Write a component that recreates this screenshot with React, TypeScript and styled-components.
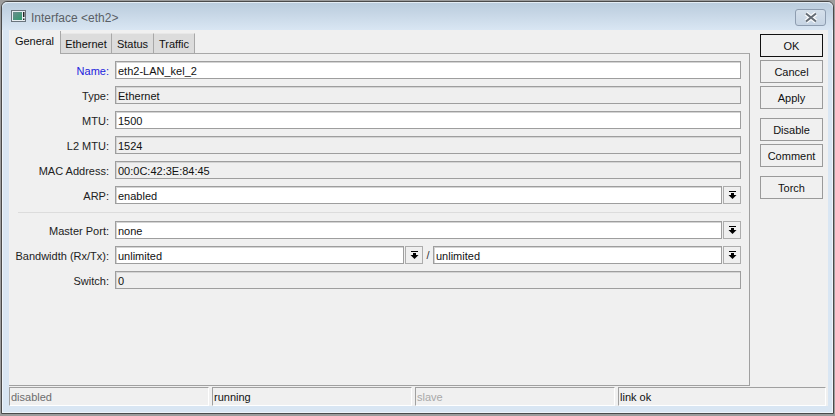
import React from 'react';
import styled, { createGlobalStyle } from 'styled-components';

const GlobalStyle = createGlobalStyle`
    html, body {
        margin: 0;
        padding: 0;
        background: #9c9c9c;
        font-family: "Liberation Sans", Arial, sans-serif;
    }
`;

const Page = styled.div`
    width: 835px;
    height: 416px;
    overflow: hidden;
`;

const Frame = styled.div`
    box-sizing: border-box;
    width: 833px;
    height: 413px;
    margin: 1px 0 0 1px;
    display: flex;
    flex-direction: column;
    border: 1px solid #4a4a4a;
    border-top-left-radius: 6px;
    border-top-right-radius: 6px;
    background: #d9e6f3;
    box-shadow: inset 0 0 0 1px #eef4fa;
    padding: 0 5px 7px 7px;
`;

const TitleBar = styled.div`
    height: 28px;
    margin: 0 -5px 0 -7px;
    padding: 0 7px 0 9px;
    display: flex;
    align-items: center;
    flex-shrink: 0;
    border-top-left-radius: 6px;
    border-top-right-radius: 6px;
    background: linear-gradient(#b9cbdc, #d9e6f3);
    box-shadow: inset 0 1px 0 #e4edf5;
`;

const TitleText = styled.span`
    margin: 3px 0 0 5px;
    font-size: 12px;
    color: #5a5f66;
    flex: 1;
`;

const CloseButton = styled.div`
    box-sizing: border-box;
    width: 31px;
    height: 17px;
    margin-top: 3px;
    display: flex;
    align-items: center;
    justify-content: center;
    border: 1px solid #8e9db0;
    border-radius: 3px;
    background: linear-gradient(#d5e0eb, #c6d4e3);
`;

const Content = styled.div`
    flex: 1;
    min-height: 0;
    display: flex;
    flex-direction: column;
    background: #f0f0f0;
`;

const Main = styled.div`
    flex: 1;
    min-height: 0;
    display: flex;
`;

const TabColumn = styled.div`
    width: 741px;
    padding-top: 1px;
    display: flex;
    flex-direction: column;
`;

const TabStrip = styled.div`
    height: 22px;
    display: flex;
    align-items: flex-end;
    flex-shrink: 0;
`;

const Tab = styled.div<{ $active?: boolean; $width: number }>`
    box-sizing: border-box;
    width: ${(p) => p.$width}px;
    height: ${(p) => (p.$active ? 23 : 20)}px;
    margin-bottom: ${(p) => (p.$active ? -1 : 0)}px;
    padding-bottom: ${(p) => (p.$active ? 4 : 0)}px;
    padding-top: 1px;
    display: flex;
    align-items: center;
    justify-content: center;
    font-size: 11px;
    color: #111;
    background: ${(p) => (p.$active ? '#f0f0f0' : '#dcdcdc')};
    border-right: 1px solid #a8a8a8;
    border-top: ${(p) => (p.$active ? 'none' : '1px solid #e8e8e8')};
    position: relative;
    z-index: ${(p) => (p.$active ? 1 : 0)};
`;

const Pane = styled.div`
    flex: 1;
    min-height: 0;
    box-sizing: border-box;
    padding: 7px 8px 0 0;
    border-top: 1px solid #a8a8a8;
    border-right: 1px solid #a0a0a0;
    border-bottom: 1px solid #a0a0a0;
    display: flex;
    flex-direction: column;
    gap: 7px;
`;

const Row = styled.div`
    display: flex;
    align-items: center;
    height: 18px;
`;

const Label = styled.div<{ $accent?: boolean }>`
    width: 100px;
    flex-shrink: 0;
    margin-right: 6px;
    padding-top: 1px;
    text-align: right;
    font-size: 11px;
    white-space: nowrap;
    color: ${(p) => (p.$accent ? '#2222dd' : '#222')};
`;

const Field = styled.div<{ $readOnly?: boolean }>`
    box-sizing: border-box;
    flex: 1;
    min-width: 0;
    height: 18px;
    padding: 1px 2px 0;
    display: flex;
    align-items: center;
    font-size: 11px;
    color: #111;
    border: 1px solid #9e9e9e;
    box-shadow: inset 1px 1px 0 #d4d4d4;
    background: ${(p) => (p.$readOnly ? '#efefef' : '#fff')};
`;

const DropButton = styled.div`
    box-sizing: border-box;
    width: 18px;
    height: 18px;
    margin-left: 1px;
    flex-shrink: 0;
    display: flex;
    align-items: center;
    justify-content: center;
    border: 1px solid #acacac;
    background: #efefef;
`;

const Slash = styled.span`
    width: 10px;
    text-align: center;
    font-size: 11px;
    color: #333;
`;

const Separator = styled.div`
    height: 1px;
    margin: 1px 0 1px 9px;
    background: #dcdcdc;
`;

const ButtonColumn = styled.div`
    padding: 4px 0 0 10px;
    display: flex;
    flex-direction: column;
`;

const ActionButton = styled.div<{ $primary?: boolean; $gap?: number }>`
    box-sizing: border-box;
    width: 63px;
    height: 23px;
    margin-top: ${(p) => p.$gap ?? 3}px;
    padding-top: 1px;
    display: flex;
    align-items: center;
    justify-content: center;
    font-size: 11px;
    color: #111;
    background: #f0f0f0;
    border: 1px solid ${(p) => (p.$primary ? '#111' : '#9a9a9a')};
`;

const StatusBar = styled.div`
    height: 20px;
    flex-shrink: 0;
    display: flex;
    gap: 3px;
    padding-top: 1px;
    box-sizing: border-box;
    padding-right: 1px;
    align-items: stretch;
`;

const StatusCell = styled.div<{ $tone: 'muted' | 'dim' | 'dark'; $wide?: boolean }>`
    box-sizing: border-box;
    width: ${(p) => (p.$wide ? 208 : 200)}px;
    padding-left: 1px;
    display: flex;
    align-items: center;
    font-size: 11px;
    border-top: 1px solid #a0a0a0;
    border-left: 1px solid #a0a0a0;
    border-right: 1px solid #fff;
    border-bottom: 1px solid #fff;
    color: ${(p) => (p.$tone === 'dark' ? '#111' : p.$tone === 'muted' ? '#6d6d6d' : '#a8a8a8')};
`;

const DropIcon = () => (
    <svg width="9" height="9" viewBox="0 0 9 9">
        <rect x="1" y="0" width="7" height="1" fill="#000" />
        <path d="M3 2h3v2h2.5L4.5 8 .5 4H3z" fill="#000" />
    </svg>
);

const WindowIcon = () => (
    <svg width="15" height="12" viewBox="0 0 15 12">
        <defs>
            <linearGradient id="winIconFill" x1="0" y1="0" x2="1" y2="1">
                <stop offset="0" stopColor="#6e8d8f" />
                <stop offset="1" stopColor="#2f9a6e" />
            </linearGradient>
        </defs>
        <rect x="0.5" y="0.5" width="14" height="11" fill="#e8eef2" stroke="#6a747d" />
        <rect x="2" y="2" width="9" height="8" fill="url(#winIconFill)" />
        <rect x="12" y="2" width="1.5" height="5" fill="#222" />
        <rect x="12" y="8.5" width="1.5" height="1.5" fill="#222" />
    </svg>
);

const CloseIcon = () => (
    <svg width="14" height="11" viewBox="0 0 14 11">
        <path d="M2 1.5L12 9.5M12 1.5L2 9.5" stroke="#fafbfc" strokeWidth="4.4" />
        <path d="M2 1.5L12 9.5M12 1.5L2 9.5" stroke="#646c75" strokeWidth="2" />
    </svg>
);

export default function App() {
    return (
        <Page>
            <GlobalStyle />
            <Frame>
                <TitleBar>
                    <WindowIcon />
                    <TitleText>Interface &lt;eth2&gt;</TitleText>
                    <CloseButton><CloseIcon /></CloseButton>
                </TitleBar>
                <Content>
                    <Main>
                        <TabColumn>
                            <TabStrip>
                                <Tab $active $width={52}>General</Tab>
                                <Tab $width={51}>Ethernet</Tab>
                                <Tab $width={42}>Status</Tab>
                                <Tab $width={41}>Traffic</Tab>
                            </TabStrip>
                            <Pane>
                                <Row>
                                    <Label $accent>Name:</Label>
                                    <Field>eth2-LAN_kel_2</Field>
                                </Row>
                                <Row>
                                    <Label>Type:</Label>
                                    <Field $readOnly>Ethernet</Field>
                                </Row>
                                <Row>
                                    <Label>MTU:</Label>
                                    <Field>1500</Field>
                                </Row>
                                <Row>
                                    <Label>L2 MTU:</Label>
                                    <Field $readOnly>1524</Field>
                                </Row>
                                <Row>
                                    <Label>MAC Address:</Label>
                                    <Field $readOnly>00:0C:42:3E:84:45</Field>
                                </Row>
                                <Row>
                                    <Label>ARP:</Label>
                                    <Field>enabled</Field>
                                    <DropButton><DropIcon /></DropButton>
                                </Row>
                                <Separator />
                                <Row>
                                    <Label>Master Port:</Label>
                                    <Field>none</Field>
                                    <DropButton><DropIcon /></DropButton>
                                </Row>
                                <Row>
                                    <Label>Bandwidth (Rx/Tx):</Label>
                                    <Field>unlimited</Field>
                                    <DropButton><DropIcon /></DropButton>
                                    <Slash>/</Slash>
                                    <Field>unlimited</Field>
                                    <DropButton><DropIcon /></DropButton>
                                </Row>
                                <Row>
                                    <Label>Switch:</Label>
                                    <Field $readOnly>0</Field>
                                </Row>
                            </Pane>
                        </TabColumn>
                        <ButtonColumn>
                            <ActionButton $primary $gap={0}>OK</ActionButton>
                            <ActionButton>Cancel</ActionButton>
                            <ActionButton>Apply</ActionButton>
                            <ActionButton $gap={9}>Disable</ActionButton>
                            <ActionButton>Comment</ActionButton>
                            <ActionButton $gap={9}>Torch</ActionButton>
                        </ButtonColumn>
                    </Main>
                    <StatusBar>
                        <StatusCell $tone="muted">disabled</StatusCell>
                        <StatusCell $tone="dark">running</StatusCell>
                        <StatusCell $tone="dim">slave</StatusCell>
                        <StatusCell $tone="dark" $wide>link ok</StatusCell>
                    </StatusBar>
                </Content>
            </Frame>
        </Page>
    );
}
